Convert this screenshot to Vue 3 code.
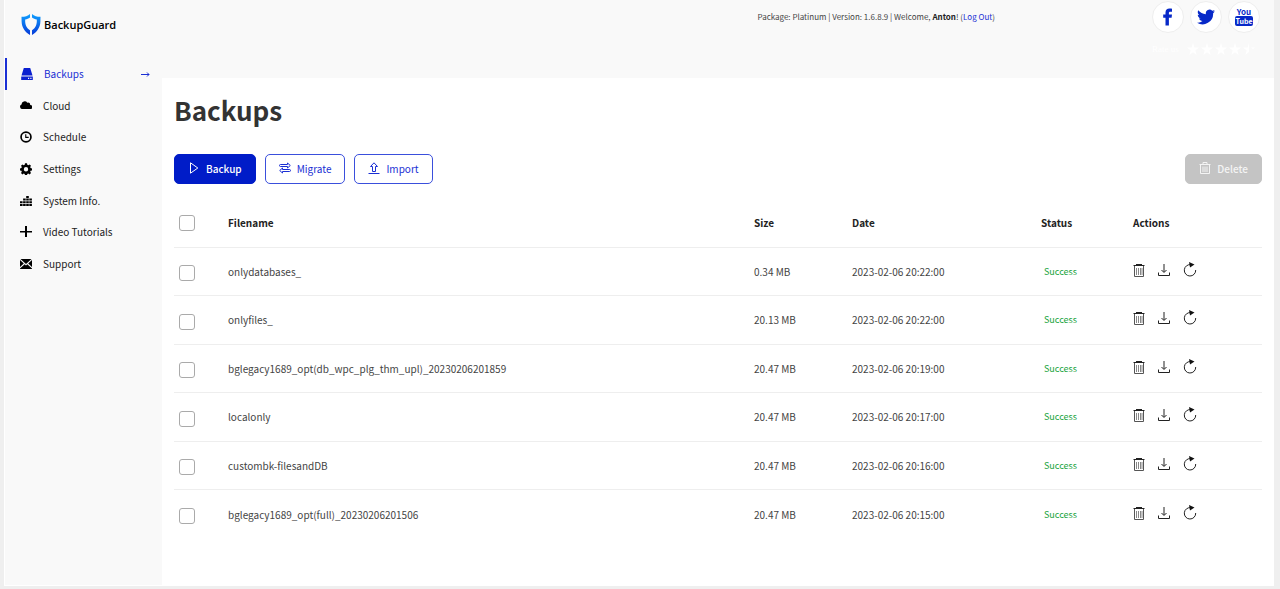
<template>
  <div class="panel">
    <header class="header">
      <a href="#" class="logo">
        <svg width="20" height="22" viewBox="0 0 20 22" aria-hidden="true">
          <defs>
            <linearGradient id="shield" x1="0" y1="0" x2="0" y2="1">
              <stop offset="0" stop-color="#0fa0ff" />
              <stop offset="1" stop-color="#0639d8" />
            </linearGradient>
          </defs>
          <path fill="url(#shield)" d="M9 0v3.500C7.500 4.800 6 5.200 4.200 5.400c-.3 4.600 1 8.200 4.800 10.800V21C3.800 17.800.8 13.500.6 7.500L.5 2.800C4 2.800 6.800 2 9 0z" />
          <path fill="url(#shield)" d="M11 0v3.500c1.500 1.300 3 1.700 4.800 1.900.3 4.600-1 8.200-4.800 10.800V21c5.200-3.200 8.200-7.500 8.400-13.500l.1-4.700C16 2.800 13.200 2 11 0z" />
        </svg>
        <span>BackupGuard</span>
      </a>
      <p class="user-info">
        Package: Platinum | Version: 1.6.8.9 | Welcome, <b>Anton</b>! (<a href="#">Log Out</a>)
      </p>
      <div class="social">
        <div class="social-links">
          <a href="#" aria-label="Facebook">
            <svg width="18" height="18" viewBox="0 0 18 18">
              <path d="M6.500 17.500V9.800H4.200V6.500h2.300V4.600C6.500 1.900 8 .5 10.500.5c1.200 0 2.100.1 2.500.2v3h-1.600c-1.200 0-1.500.6-1.500 1.400v1.400H13l-.4 3.300H9.900v7.700z" />
            </svg>
          </a>
          <a href="#" aria-label="Twitter">
            <svg width="18" height="18" viewBox="0 0 24 24">
              <path d="M24 4.400c-.9.400-1.800.7-2.800.8 1-.6 1.800-1.600 2.200-2.700-1 .6-2 1-3.100 1.200A4.900 4.900 0 0 0 11.900 8.200C7.700 8 4.100 6 1.700 3c-1.300 2.200-.7 5.100 1.500 6.600-.8 0-1.600-.2-2.200-.6 0 2.300 1.600 4.400 3.900 4.900-.7.200-1.500.2-2.200.1.600 2 2.400 3.400 4.600 3.400A9.900 9.900 0 0 1 0 19.500 14 14 0 0 0 21.500 7c1-.7 1.800-1.600 2.500-2.600z" />
            </svg>
          </a>
          <a href="#" class="youtube" aria-label="YouTube">
            <span>You</span>
            <span>Tube</span>
          </a>
        </div>
        <div class="rate">
          <span>Rate us</span>
          <svg width="70" height="14" viewBox="0 0 70 14" aria-hidden="true">
            <path v-for="i in 4" :key="i" :transform="`translate(${(i - 1) * 14} 1)`" :d="starPath" />
            <path transform="translate(56 1)" d="M6 0v9.100L2.300 12l1.400-4.400L0 4.600h4.600zM8 4.600h4L10 6z" />
          </svg>
        </div>
      </div>
    </header>

    <div class="body">
      <nav class="sidebar">
        <div class="menu">
          <a
            v-for="item in menu"
            :key="item.name"
            href="#"
            class="menu-item"
            :class="{ active: item.name === activeItem }"
            @click.prevent="activeItem = item.name"
          >
            <svg width="12" height="12" viewBox="0 0 12 12" aria-hidden="true">
              <path fill-rule="evenodd" :d="item.icon" />
            </svg>
            <span>{{ item.name }}</span>
            <svg v-if="item.name === activeItem" class="arrow" width="9" height="6" viewBox="0 0 9 6" aria-hidden="true">
              <path d="M0 3.500h8M6 1.500l2 2-2 2" />
            </svg>
          </a>
        </div>
      </nav>

      <main class="content">
        <h1>Backups</h1>

        <div class="toolbar">
          <button type="button" class="btn primary">
            <svg width="12" height="12" viewBox="0 0 12 12"><path d="M2.500.8v10.400L9.800 6z" /></svg>
            Backup
          </button>
          <button type="button" class="btn">
            <svg width="12" height="12" viewBox="0 0 12 12">
              <path d="M8.500 2.500h-7a1 1 0 0 0 0 2h7M8.500 2.500V1l2.800 2.500L8.500 6V4.500M3.500 7.500h7a1 1 0 0 1 0 2h-7M3.500 7.500V6L.7 8.500 3.500 11V9.500" />
            </svg>
            Migrate
          </button>
          <button type="button" class="btn">
            <svg width="12" height="12" viewBox="0 0 12 12">
              <path d="M4.500 9.500v-5h-2L6 .8l3.500 3.700h-2v5zM.5 11.500h11" />
            </svg>
            Import
          </button>
          <button type="button" class="btn delete" :disabled="!selected.length">
            <svg width="12" height="12" viewBox="0 0 12 12"><path :d="trashPath" /></svg>
            Delete
          </button>
        </div>

        <table>
          <colgroup>
            <col class="col-check" />
            <col />
            <col class="col-size" />
            <col class="col-date" />
            <col class="col-status" />
            <col class="col-actions" />
          </colgroup>
          <thead>
            <tr>
              <th class="check"><input v-model="allSelected" type="checkbox" aria-label="Select all" /></th>
              <th>Filename</th>
              <th>Size</th>
              <th>Date</th>
              <th>Status</th>
              <th>Actions</th>
            </tr>
          </thead>
          <tbody>
            <tr v-for="row in backups" :key="row.name">
              <td class="check"><input v-model="selected" type="checkbox" :value="row.name" :aria-label="row.name" /></td>
              <td>{{ row.name }}</td>
              <td>{{ row.size }}</td>
              <td>{{ row.date }}</td>
              <td class="status">Success</td>
              <td>
                <div class="actions">
                  <button type="button" aria-label="Delete">
                    <svg width="12" height="14" viewBox="0 0 12 14">
                      <path d="M.5 2.500h11M3 1.500h6" />
                      <path class="frame" d="M1.500 3v10.500h9V3" />
                      <path class="thin" d="M3.500 5v7M5.500 5v7M7.500 5v7M9 5v7" />
                    </svg>
                  </button>
                  <button type="button" aria-label="Download">
                    <svg width="14" height="14" viewBox="0 0 14 14">
                      <path d="M1.500 9.500v3h11v-3M7 1v8M4.500 7L7 9.500 9.500 7" />
                    </svg>
                  </button>
                  <button type="button" aria-label="Restore">
                    <svg width="14" height="16" viewBox="0 0 14 16">
                      <path d="M8 2.700A5.700 5.700 0 1 0 12.700 8" />
                      <path class="fill" d="M6 0L11.500 2.600 7 5.500z" />
                    </svg>
                  </button>
                </div>
              </td>
            </tr>
          </tbody>
        </table>
      </main>
    </div>
  </div>
</template>

<script setup>

  import { computed, ref } from 'vue';

  const starPath = 'M6 0l1.400 4.600H12L8.300 7.500 9.700 12 6 9.200 2.300 12l1.400-4.500L0 4.600h4.600z';
  const trashPath = 'M.5 2.500h11M4 2V.5h4V2M1.500 3v8.500h9V3M4 4.500v5.500M6 4.500v5.500M8 4.500v5.500';

  const menu = [
    { name: 'Backups', icon: 'M2.800 0h6.400l2.300 7.500H.5zM.2 8.500h11.600V12H.2zM7 9.700v1.200h1.200V9.700zM9.300 9.700v1.200h1.200V9.700z' },
    { name: 'Cloud', icon: 'M2.600 9A2.400 2.400 0 0 1 1.500 4.400 3.200 3.200 0 0 1 7.300 2.700 2.500 2.500 0 0 1 10.300 5 2 2 0 0 1 10.200 9z' },
    { name: 'Schedule', icon: 'M6 .2a5.800 5.800 0 1 0 0 11.600A5.800 5.800 0 0 0 6 .2zM6 1.900a4.100 4.100 0 1 1 0 8.200A4.100 4.100 0 0 1 6 1.900zM5.200 3.200v3.700h3.500V5.700H6.300V3.200z' },
    { name: 'Settings', icon: 'M5 .3h2l.3 1.500 1 .4 1.300-.8L11 2.800l-.8 1.300.4 1 1.500.3v2l-1.500.3-.4 1 .8 1.300-1.400 1.400-1.300-.8-1 .4-.3 1.300H5l-.3-1.300-1-.4-1.300.8L1 10l.8-1.300-.4-1-1.400-.3v-2l1.400-.3.4-1L1 2.800l1.400-1.400 1.300.8 1-.4zM6 4a2.200 2.200 0 1 0 0 4.400A2.200 2.200 0 0 0 6 4z' },
    { name: 'System Info.', icon: 'M0 9h2.600v2H0zM0 6.300h2.600v2H0zM3.100 9h2.600v2H3.100zM3.100 6.300h2.600v2H3.100zM3.100 3.600h2.600v2H3.100zM6.200 9h2.600v2H6.200zM6.200 6.300h2.600v2H6.200zM6.200 3.600h2.600v2H6.200zM6.200.900h2.600v2H6.200zM9.300 9h2.600v2H9.300zM9.300 6.300h2.600v2H9.300zM9.300 3.600h2.600v2H9.300z' },
    { name: 'Video Tutorials', icon: 'M5 0h2v5h5v1.500H7V11H5V6.500H0V5h5z' },
    { name: 'Support', icon: 'M.5 1h11L6 6zM0 2l3.800 3.500L0 9zM12 2L8.200 5.500 12 9zM4.700 6.300L6 7.500l1.300-1.200L12 10.500V11H0v-.5z' }
  ];

  const backups = [
    { name: 'onlydatabases_', size: '0.34 MB', date: '2023-02-06 20:22:00' },
    { name: 'onlyfiles_', size: '20.13 MB', date: '2023-02-06 20:22:00' },
    { name: 'bglegacy1689_opt(db_wpc_plg_thm_upl)_20230206201859', size: '20.47 MB', date: '2023-02-06 20:19:00' },
    { name: 'localonly', size: '20.47 MB', date: '2023-02-06 20:17:00' },
    { name: 'custombk-filesandDB', size: '20.47 MB', date: '2023-02-06 20:16:00' },
    { name: 'bglegacy1689_opt(full)_20230206201506', size: '20.47 MB', date: '2023-02-06 20:15:00' }
  ];

  const activeItem = ref('Backups');
  const selected = ref([]);

  const allSelected = computed({
    get: () => selected.value.length === backups.length,
    set: (checked) => {
      selected.value = checked ? backups.map((row) => row.name) : [];
    }
  });

</script>

<style>
body {
  background: #efefef;
}
</style>

<style scoped>

.panel {
  display: flex;
  flex-direction: column;
  box-sizing: border-box;
  min-height: calc(100vh - 3px);
  margin: 0 6px 3px 4px;
  padding: 0 0 1px 1px;
  background: #fff;
  color: #444;
  font-family: "Noto Sans CJK SC", "Noto Sans", sans-serif;
  font-size: 10px;
  line-height: 16px;
}

a {
  color: #1a2fd4;
  text-decoration: none;
}

.header {
  display: flex;
  align-items: flex-start;
  box-sizing: border-box;
  height: 78px;
  padding: 0 14px 0 16px;
  background: #f9f9f9;
}

.logo {
  display: flex;
  align-items: center;
  gap: 3px;
  margin-top: 14px;
  color: #000;
  font-family: "Open Sans", sans-serif;
  font-size: 11px;
  font-weight: 600;
}

.user-info {
  margin: 9px 157px 0 auto;
  font-size: 8px;
}

.user-info b {
  color: #222;
}

.social-links {
  display: flex;
  gap: 6px;
  padding-top: 1px;
}

.social-links a {
  display: flex;
  align-items: center;
  justify-content: center;
  box-sizing: border-box;
  width: 32px;
  height: 32px;
  border: 1px solid #eee;
  border-radius: 50%;
  background: #fff;
}

.social-links svg {
  fill: #0628c8;
}

.social-links .youtube {
  flex-direction: column;
  color: #0628c8;
  font-size: 8px;
  font-weight: bold;
  line-height: 8px;
}

.youtube span:last-child {
  border-radius: 2px;
  background: #0628c8;
  color: #fff;
  font-size: 7px;
  line-height: 10px;
}

.rate {
  display: flex;
  align-items: center;
  gap: 8px;
  margin-top: 8px;
  color: #fff;
  font-family: "Liberation Serif", serif;
  font-size: 9px;
}

.rate svg {
  fill: #fff;
}

.body {
  display: flex;
  flex: 1;
}

.sidebar {
  flex: none;
  width: 157px;
  margin-top: -20px;
  background: #f9f9f9;
}

.menu {
  display: flex;
  flex-direction: column;
  height: 222px;
}

.menu-item {
  display: flex;
  flex: 1;
  align-items: center;
  padding: 0 12px 0 15px;
  color: #222;
}

.menu-item span {
  margin-left: 11px;
}

.menu-item.active {
  border-left: 2px solid #1a2fd4;
  padding-left: 14px;
  color: #1a2fd4;
}

.menu-item svg {
  fill: #000;
}

.menu-item.active svg {
  fill: #0a1fd0;
}

.menu-item .arrow {
  margin-left: auto;
  stroke: #1a2fd4;
}

.menu-item.active .arrow {
  fill: none;
}

.content {
  flex: 1;
  min-width: 0;
  padding: 12px;
}

h1 {
  margin: 0;
  color: #333;
  font-size: 26px;
  line-height: 40px;
}

.toolbar {
  display: flex;
  gap: 9px;
  margin-top: 24px;
}

.btn {
  display: flex;
  align-items: center;
  gap: 6px;
  height: 30px;
  padding: 0 13px 2px;
  border: 1px solid #3a4fdc;
  border-radius: 5px;
  background: #fff;
  color: #1a2fd4;
  font-family: inherit;
  font-size: 10px;
}

.btn svg {
  fill: none;
  stroke: currentColor;
}

.btn.primary {
  border-color: #001cc8;
  background: #001cc8;
  color: #fff;
  font-weight: 500;
}

.btn.delete {
  margin-left: auto;
  border-color: #c4c4c4;
  background: #c4c4c4;
  color: #f4f4f4;
  font-weight: 500;
}

table {
  width: 100%;
  margin-top: 15px;
  border-spacing: 0;
  table-layout: fixed;
}

.col-check {
  width: 46px;
}

.col-size {
  width: 98px;
}

.col-date {
  width: 189px;
}

.col-status {
  width: 92px;
}

.col-actions {
  width: 137px;
}

th,
td {
  box-sizing: border-box;
  height: 49px;
  padding: 0 8px;
  border-bottom: 1px solid #eee;
  text-align: left;
}

th {
  color: #222;
}

tbody tr:nth-child(odd) td {
  height: 48px;
}

tbody tr:last-child td {
  border-bottom: 0;
}

.check {
  padding: 0 5px;
}

td.check {
  padding-top: 3px;
}

input {
  display: block;
  width: 16px;
  height: 16px;
  margin: 0;
  border: 1px solid #aaa;
  border-radius: 3px;
  background: #fff;
  appearance: none;
}

input:checked {
  background: #001cc8;
}

.status {
  padding-left: 11px;
  color: #18a33c;
  font-size: 9px;
}

.actions {
  display: flex;
  align-items: center;
  gap: 12px;
  padding-bottom: 4px;
}

.actions button {
  display: flex;
  padding: 0;
  border: 0;
  background: none;
}

.actions svg {
  fill: none;
  stroke: #222;
}

.actions .frame {
  stroke: #555;
}

.actions .thin {
  stroke: #888;
}

.actions .fill {
  fill: #111;
  stroke: none;
}

</style>
